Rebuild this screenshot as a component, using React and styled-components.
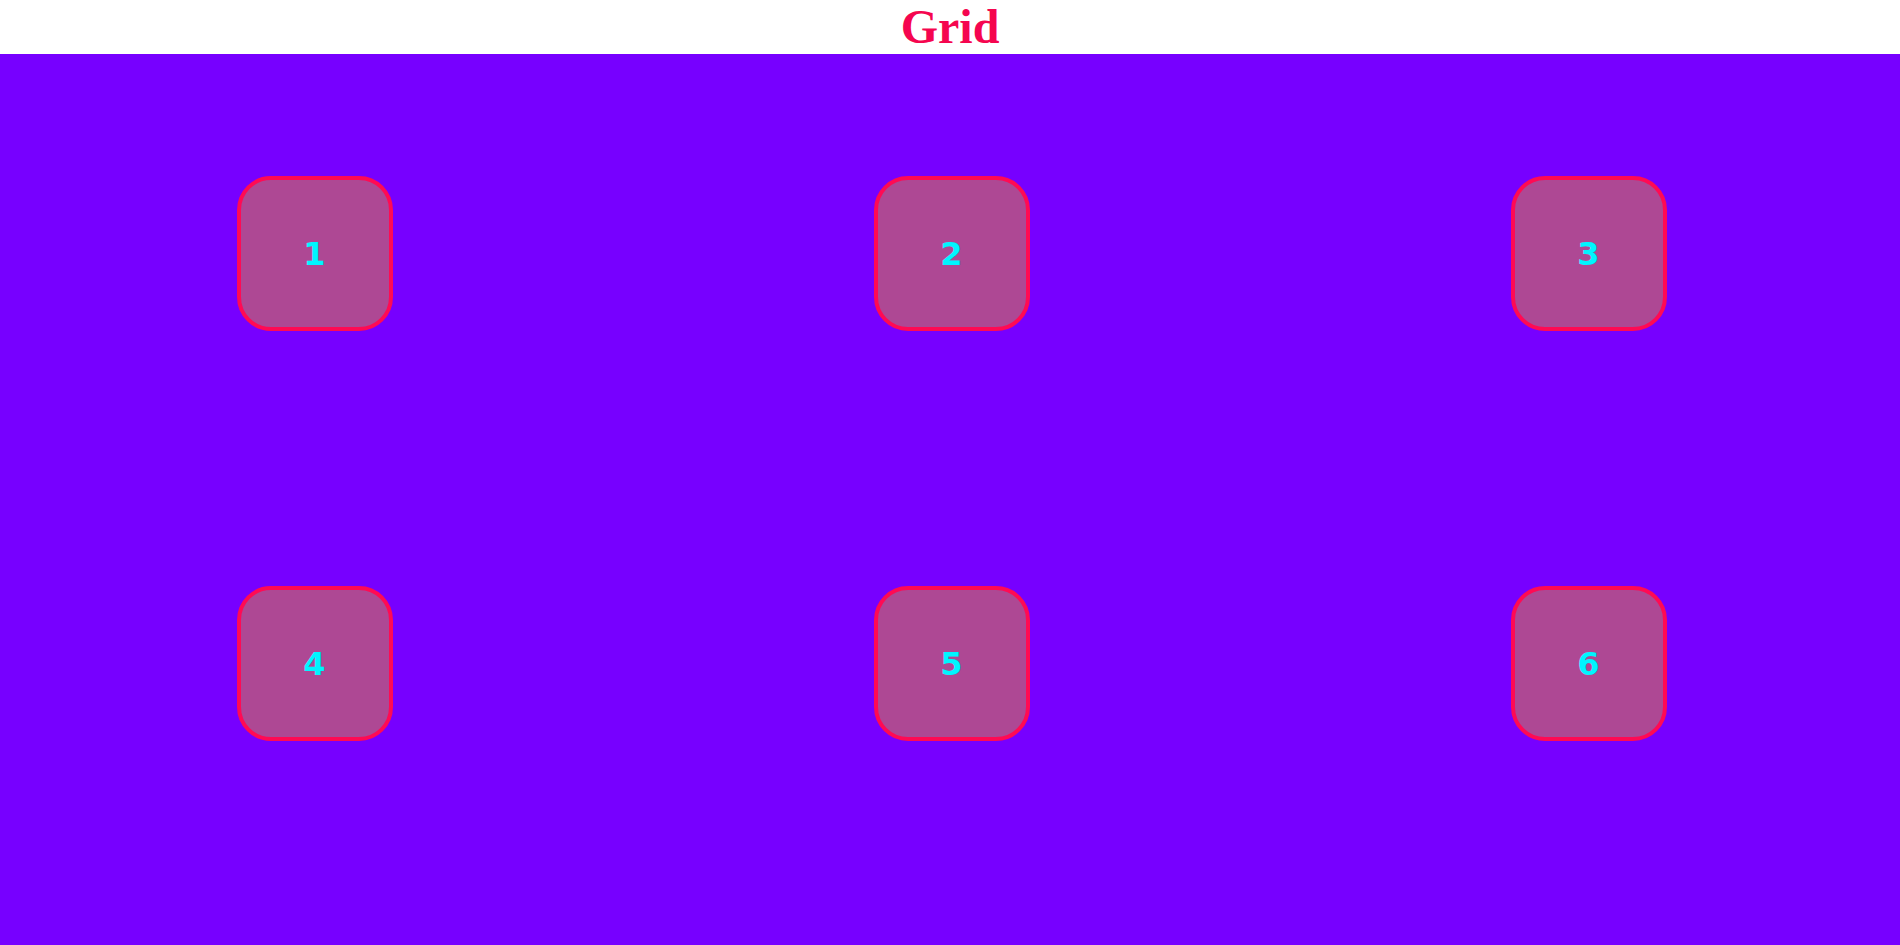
import styled, { createGlobalStyle } from "styled-components";

const GlobalStyle = createGlobalStyle`
  html, body {
    margin: 0;
    padding: 0;
    background: #7700ff;
  }
  #root {
    min-height: 100vh;
    display: flex;
    flex-direction: column;
  }
`;

const Header = styled.header`
  background: #ffffff;
  height: 54px;
  display: flex;
  justify-content: center;
  align-items: center;
  & h1 {
    margin: 0;
    font-family: "Times New Roman", "Liberation Serif", Times, serif;
    font-size: 48px;
    font-weight: bold;
    color: #f5054f;
    line-height: 54px;
  }
`;

const GridArea = styled.main`
  flex: 1;
  background: #7700ff;
  display: grid;
  grid-template-columns: repeat(3, 156px);
  column-gap: 481px;
  row-gap: 255px;
  justify-content: center;
  align-content: start;
  padding: 122px 0 0 3px;
`;

const Cell = styled.div`
  box-sizing: border-box;
  width: 156px;
  height: 155px;
  border: 4px solid #ff0a54;
  border-radius: 34px;
  background: #ae4894;
  display: flex;
  justify-content: center;
  align-items: center;
  color: #00f5ff;
  font-family: "DejaVu Sans", sans-serif;
  font-size: 32px;
  font-weight: bold;
`;

const cells = [1, 2, 3, 4, 5, 6];

const App = () => {
  return (
    <>
      <GlobalStyle />
      <Header>
        <h1>Grid</h1>
      </Header>
      <GridArea>
        {cells.map((n) => (
          <Cell key={n}>{n}</Cell>
        ))}
      </GridArea>
    </>
  );
};

export default App;
